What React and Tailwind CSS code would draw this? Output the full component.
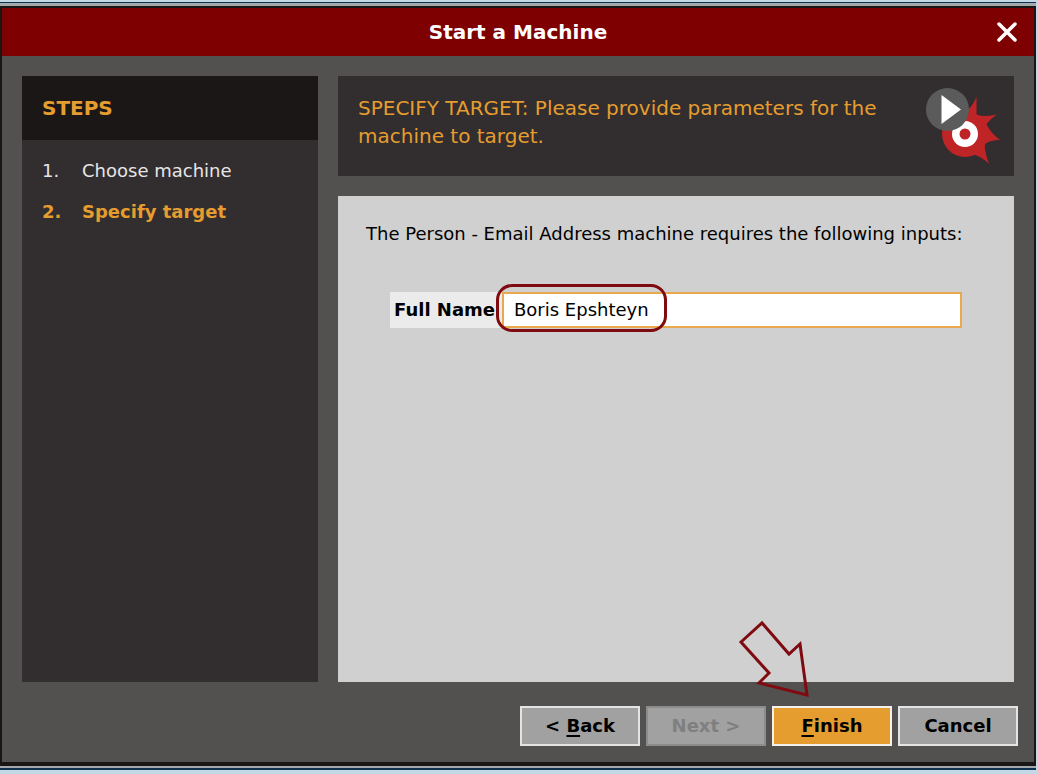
import React, { useState } from "react";

const steps = ["Choose machine", "Specify target"];

// machine logo: red gear with a play badge on top
const MachineIcon = () => (
  <svg className="h-20 w-20 shrink-0" viewBox="0 0 80 80" aria-hidden="true">
    <circle cx="39" cy="48" r="23" fill="#bf2426" />
    <path
      d="M41 24 Q47 20 50.5 10.5 L50.5 29 Q60 31 71 28.5 Q64 33 60.5 38.5 Q65 47 74 54 Q65 54 58.5 58 Q59 67 63 78 Q56 71 49 69 L36 56 Z"
      fill="#bf2426"
    />
    <circle cx="39" cy="48" r="9.25" fill="#bf2426" stroke="#ffffff" strokeWidth="7.5" />
    <circle cx="21.5" cy="23.5" r="21.5" fill="#5b5b5b" />
    <path d="M15.5 9 L35 23.5 L15.5 38 Z" fill="#ffffff" />
  </svg>
);

const FooterButton = ({ children, primary, ...props }) => (
  <button
    type="button"
    className={
      primary
        ? "h-10 w-30 border-2 border-[#f4f1ec] bg-[#e59d30] text-black"
        : "h-10 w-30 border-2 border-[#e4e4e4] bg-[#a1a1a1] text-black disabled:border-[#8c8c8c] disabled:text-[#7f7f7f]"
    }
    {...props}
  >
    {children}
  </button>
);

const App = () => {
  const [fullName, setFullName] = useState("Boris Epshteyn");
  const currentStep = 1;

  return (
    <div className="flex min-h-screen flex-col border-t-2 border-r-2 border-b-4 border-[#c3d7e4] bg-[#c3d7e4] font-['DejaVu_Sans',sans-serif] text-lg">
      <div className="flex flex-1 flex-col border-t border-b-2 border-[#0f3150]">
        <div className="flex flex-1 flex-col border-t-3 border-b-2 border-[#a3a8aa]">
          <div className="flex flex-1 flex-col border-x-2 border-t-2 border-b-4 border-[#1a1616] bg-[#535050]">
            <header className="grid h-12 grid-cols-[54px_1fr_54px] items-center bg-[#7f0000] text-white">
              <h1 className="col-start-2 text-center text-xl font-bold">
                Start a Machine
              </h1>
              <button type="button" aria-label="Close" className="flex justify-center">
                <svg className="h-5 w-5" viewBox="0 0 20 20">
                  <path
                    d="M2 2 L18 18 M18 2 L2 18"
                    stroke="currentColor"
                    strokeWidth="3.5"
                    strokeLinecap="round"
                  />
                </svg>
              </button>
            </header>

            <main className="flex flex-1 gap-5 px-5 pt-5">
              <aside className="w-[296px] shrink-0 bg-[#322d2e]">
                <h2 className="flex h-16 items-center bg-[#1b1717] px-5 text-xl font-bold text-[#e59d30]">
                  STEPS
                </h2>
                <ol className="flex flex-col gap-4 px-5 py-[18px]">
                  {steps.map((step, i) => (
                    <li
                      key={step}
                      className={
                        i === currentStep
                          ? "flex leading-[25px] font-bold text-[#e59d30]"
                          : "flex leading-[25px] text-[#e6e6e6]"
                      }
                    >
                      <span className="w-10">{i + 1}.</span>
                      {step}
                    </li>
                  ))}
                </ol>
              </aside>

              <div className="flex flex-1 flex-col gap-5">
                <section className="flex items-start justify-between bg-[#322d2e] py-[10px] pr-2 pl-5">
                  <p className="max-w-[550px] pt-2 text-xl leading-7 text-[#e59d30]">
                    SPECIFY TARGET: Please provide parameters for the machine to
                    target.
                  </p>
                  <MachineIcon />
                </section>

                <section className="flex-1 bg-[#d0d0d0] px-7 py-6">
                  <p className="leading-7 text-black">
                    The Person - Email Address machine requires the following
                    inputs:
                  </p>
                  <div className="mt-11 mr-6 ml-6 flex h-9">
                    <label
                      htmlFor="full-name"
                      className="flex w-28 shrink-0 items-center bg-[#ebebeb] pl-1 font-bold text-black"
                    >
                      Full Name
                    </label>
                    <div className="relative flex flex-1">
                      <input
                        id="full-name"
                        type="text"
                        value={fullName}
                        onChange={(e) => setFullName(e.target.value)}
                        className="w-full border-2 border-[#e8a94e] bg-white px-[10px] text-black outline-none"
                      />
                      {/* highlight around the value */}
                      <span className="pointer-events-none absolute -top-2 -left-[6px] h-12 w-[171px] rounded-2xl border-3 border-[#7f0a10]" />
                    </div>
                  </div>
                </section>
              </div>
            </main>

            <footer className="flex justify-end gap-[6px] px-4 pt-6 pb-4 font-bold">
              <FooterButton>
                &lt; <span className="underline decoration-2 underline-offset-3">B</span>ack
              </FooterButton>
              <FooterButton disabled>Next &gt;</FooterButton>
              <div className="relative">
                <FooterButton primary>
                  <span className="underline decoration-2 underline-offset-3">F</span>inish
                </FooterButton>
                {/* arrow pointing at Finish */}
                <svg
                  className="pointer-events-none absolute -top-22 -left-9 h-20 w-20"
                  viewBox="0 0 80 80"
                  aria-hidden="true"
                >
                  <path
                    d="M5 24 L26 5 L53 36 L64 26 L71 77 L23 65 L33 55 Z"
                    fill="none"
                    stroke="#7f0a10"
                    strokeWidth="3"
                  />
                </svg>
              </div>
              <FooterButton>Cancel</FooterButton>
            </footer>
          </div>
        </div>
      </div>
    </div>
  );
};

export default App;
